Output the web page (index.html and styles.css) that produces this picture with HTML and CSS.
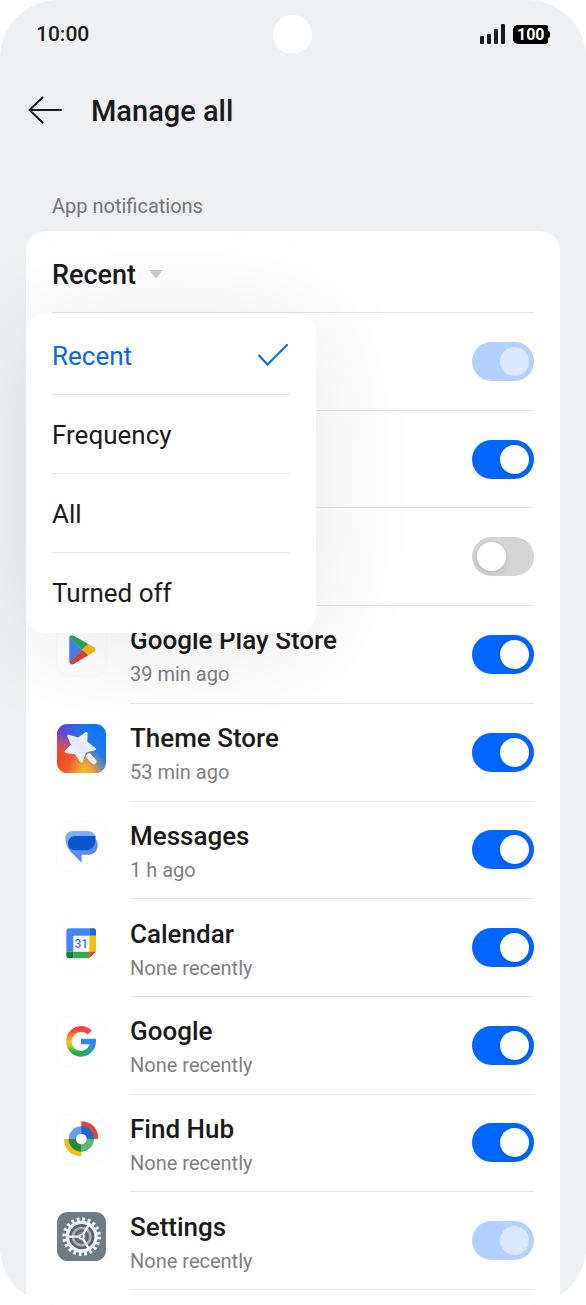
FILE: index.html
```html
<!DOCTYPE html>
<html lang="en">
<head>
<meta charset="utf-8">
<meta name="viewport" content="width=device-width, initial-scale=1">
<title>Manage all</title>
<link rel="stylesheet" href="styles.css">
</head>
<body>
<div class="phone">
  <div class="status-bar">
    <span class="clock">10:00</span>
    <span class="camera"></span>
    <span class="indicators">
      <svg class="signal" viewBox="0 0 26 20" aria-hidden="true"><rect x="1" y="12" width="4" height="8" rx="1"/><rect x="8" y="10" width="4" height="10" rx="1"/><rect x="15" y="5" width="4" height="15" rx="1"/><rect x="22" width="4" height="20" rx="1"/></svg>
      <span class="battery">100</span>
    </span>
  </div>
  <header class="title-bar">
    <button class="back" type="button" aria-label="Back">
      <svg viewBox="0 0 34 28" aria-hidden="true"><path d="M14.500 1.500 1.500 14l13 12.500M1.500 14H33"/></svg>
    </button>
    <h1 class="title">Manage all</h1>
  </header>
  <h2 class="section-label">App notifications</h2>
  <main class="card">
    <div class="filter">
      <button class="filter-button" type="button" aria-haspopup="listbox" aria-expanded="true">Recent
        <svg class="caret" viewBox="0 0 14 9" aria-hidden="true"><path d="M.5 0h13L7.600 8q-.600.600-1.200 0z"/></svg>
      </button>
      <div class="menu" role="listbox" aria-label="Recent">
        <button class="option selected" type="button" role="option" aria-selected="true">Recent
          <svg class="check" viewBox="0 0 32 24" aria-hidden="true"><path d="M1 11.500 9.500 20.500 29 1"/></svg>
        </button>
        <button class="option" type="button" role="option" aria-selected="false">Frequency</button>
        <button class="option" type="button" role="option" aria-selected="false">All</button>
        <button class="option" type="button" role="option" aria-selected="false">Turned off</button>
      </div>
    </div>
    <ul class="apps">
      <li class="app"><div class="app-body"><input class="switch" type="checkbox" aria-label="Notifications" checked disabled></div></li>
      <li class="app"><div class="app-body"><input class="switch" type="checkbox" aria-label="Notifications" checked></div></li>
      <li class="app"><div class="app-body"><input class="switch" type="checkbox" aria-label="Notifications"></div></li>
      <li class="app">
        <svg class="icon tile" viewBox="0 0 147 147" aria-hidden="true">
          <path fill="#34a353" d="M37 34q3-9 13-5l44 25-19 17z"/>
          <path fill="#f5b70b" d="M75 71 94 54l17 10q9 7 0 14L94 88z"/>
          <path fill="#e04336" d="M37 108 75 71l19 17-44 26q-10 4-13-6z"/>
          <path fill="#4382ec" d="M37 32 75 71 37 110z"/>
        </svg>
        <div class="app-body">
          <label class="app-text" for="play"><span class="name">Google Play Store</span><span class="when">39 min ago</span></label>
          <input class="switch" type="checkbox" id="play" checked>
        </div>
      </li>
      <li class="app">
        <svg class="icon" viewBox="0 0 147 147" aria-hidden="true">
          <defs>
            <linearGradient id="theme-base" x1="0" y1="1" x2="1" y2="0"><stop offset="0" stop-color="#ff3c14"/><stop offset=".3" stop-color="#c8506a"/><stop offset=".5" stop-color="#277be8"/><stop offset="1" stop-color="#0575ff"/></linearGradient>
            <radialGradient id="theme-warm" cx=".45" cy="1.050" r=".62"><stop offset="0" stop-color="#ffc414"/><stop offset=".45" stop-color="#f9ac2c" stop-opacity=".9"/><stop offset="1" stop-color="#f9a02c" stop-opacity="0"/></radialGradient>
            <radialGradient id="theme-red" cx="0" cy=".75" r=".55"><stop offset="0" stop-color="#ff4416"/><stop offset=".5" stop-color="#f04a30" stop-opacity=".8"/><stop offset="1" stop-color="#f04a50" stop-opacity="0"/></radialGradient>
            <radialGradient id="theme-violet" cx="0" cy=".1" r=".6"><stop offset="0" stop-color="#7437d8"/><stop offset="1" stop-color="#5548d8" stop-opacity="0"/></radialGradient>
            <linearGradient id="theme-star" x1="1" y1="0" x2=".2" y2="1"><stop offset="0" stop-color="#fff"/><stop offset=".5" stop-color="#e6e8fa"/><stop offset="1" stop-color="#fff4ee"/></linearGradient>
          </defs>
          <rect width="147" height="147" rx="32" fill="url(#theme-base)"/>
          <rect width="147" height="147" rx="32" fill="url(#theme-violet)"/>
          <rect width="147" height="147" rx="32" fill="url(#theme-warm)"/>
          <rect width="147" height="147" rx="32" fill="url(#theme-red)"/>
          <path fill="url(#theme-star)" stroke="url(#theme-star)" stroke-width="8" stroke-linejoin="round" d="M88 28 87 55 113 75 84 82 73 112 56 87 27 83 46 62 35 36 63 45z"/>
          <path stroke="#f2efe8" stroke-width="17" stroke-linecap="round" d="M96 97l14 15"/>
        </svg>
        <div class="app-body">
          <label class="app-text" for="theme"><span class="name">Theme Store</span><span class="when">53 min ago</span></label>
          <input class="switch" type="checkbox" id="theme" checked>
        </div>
      </li>
      <li class="app">
        <svg class="icon tile" viewBox="0 2 147 147" aria-hidden="true">
          <path fill="#82abf7" d="M48 29h43q23 0 25 20L74 90 48 98Q25 79 25 53q0-24 23-24z"/>
          <path fill="#5b8ef5" d="M56 44h40c35 0 35 56 0 56H74v24L45 95Q33 83 33 68q0-24 23-24z"/>
          <path fill="#0b55ce" d="M54 44h61c3 22-7 43-28 43H56c-15 0-23-10-23-21s8-22 21-22z"/>
        </svg>
        <div class="app-body">
          <label class="app-text" for="messages"><span class="name">Messages</span><span class="when">1 h ago</span></label>
          <input class="switch" type="checkbox" id="messages" checked>
        </div>
      </li>
      <li class="app">
        <svg class="icon tile" viewBox="0 -7 147 147" aria-hidden="true">
          <path fill="#4285f4" d="M35 21h62v22H49v48H28V28q0-7 7-7z"/>
          <path fill="#1967d2" d="M97 21h13q7 0 7 7v15H97z"/>
          <path fill="#fbbc04" d="M97 43h20v48H97z"/>
          <path fill="#34a853" d="M49 91h48v20H49z"/>
          <path fill="#188038" d="M28 91h21v20H35q-7 0-7-7z"/>
          <path fill="#ea4335" d="M97 91h20l-20 20z"/>
          <text class="calendar-day" x="73" y="79" text-anchor="middle">31</text>
        </svg>
        <div class="app-body">
          <label class="app-text" for="calendar"><span class="name">Calendar</span><span class="when">None recently</span></label>
          <input class="switch" type="checkbox" id="calendar" checked>
        </div>
      </li>
      <li class="app">
        <svg class="icon tile" viewBox="0 0 147 147" aria-hidden="true">
          <defs>
            <linearGradient id="g-left" x1="0" y1="27" x2="0" y2="119" gradientUnits="userSpaceOnUse"><stop offset=".15" stop-color="#f9443f"/><stop offset=".32" stop-color="#fb7b2a"/><stop offset=".5" stop-color="#fcc60b"/><stop offset=".65" stop-color="#b9c72a"/><stop offset=".85" stop-color="#23b04c"/></linearGradient>
            <linearGradient id="g-bottom" x1="72" y1="0" x2="112" y2="0" gradientUnits="userSpaceOnUse"><stop offset="0" stop-color="#16b253"/><stop offset=".5" stop-color="#2aa0a0"/><stop offset="1" stop-color="#3186ff"/></linearGradient>
          </defs>
          <g fill="none" stroke-width="17">
            <path stroke="#fb4548" d="M72 35.500A37.500 37.500 0 0 1 98.500 46.500"/>
            <path stroke="url(#g-left)" d="M73 35.500a37.500 37.500 0 0 0 0 75"/>
            <path stroke="url(#g-bottom)" d="M72 110.500A37.500 37.500 0 0 0 108.500 73"/>
          </g>
          <path fill="#3186ff" d="M72 65h45v9l-9 8H72z"/>
        </svg>
        <div class="app-body">
          <label class="app-text" for="google"><span class="name">Google</span><span class="when">None recently</span></label>
          <input class="switch" type="checkbox" id="google" checked>
        </div>
      </li>
      <li class="app">
        <svg class="icon tile" viewBox="0 0 147 147" aria-hidden="true">
          <path fill="#dd473c" d="M73 22q0-4 4-3.500Q120 24 124 67q0 5-4 5H73z"/>
          <path fill="#f5bd17" d="M73 72v48q0 4-4 3.500Q26 119 21 76q0-4 4-4z"/>
          <path fill="#669df6" d="M73 72H35a38 38 0 0 1 38-38z"/>
          <path fill="#1d67d3" d="M73 72V34a38 38 0 0 1 38 38z"/>
          <path fill="#5bb974" d="M73 72h38a38 38 0 0 1-38 38z"/>
          <path fill="#24883f" d="M73 72v38a38 38 0 0 1-38-38z"/>
          <circle cx="73" cy="72" r="16" fill="#fff"/>
        </svg>
        <div class="app-body">
          <label class="app-text" for="find"><span class="name">Find Hub</span><span class="when">None recently</span></label>
          <input class="switch" type="checkbox" id="find" checked>
        </div>
      </li>
      <li class="app">
        <svg class="icon" viewBox="0 0 147 147" aria-hidden="true">
          <rect width="147" height="147" rx="32" fill="#707c85"/>
          <circle cx="74" cy="74" r="44" fill="#59636b"/>
          <circle cx="74" cy="74" r="26" fill="none" stroke="#a9b0b8" stroke-width="8"/>
          <circle cx="74" cy="74" r="15" fill="#747e87"/>
          <g fill="none" stroke="#f0f3fb">
            <circle cx="74" cy="74" r="43" stroke-width="10"/>
            <circle cx="74" cy="74" r="52" stroke-width="12" stroke-dasharray="8.170 8.170"/>
            <path stroke-width="7" d="M31 74h43l22-37M74 74l22 37"/>
          </g>
          <circle cx="74" cy="74" r="9" fill="#f0f3fb"/>
          <circle cx="74" cy="74" r="4" fill="#707c85"/>
        </svg>
        <div class="app-body">
          <label class="app-text" for="settings"><span class="name">Settings</span><span class="when">None recently</span></label>
          <input class="switch" type="checkbox" id="settings" checked disabled>
        </div>
      </li>
    </ul>
  </main>
</div>
</body>
</html>
```
FILE: styles.css
```css
* { box-sizing: border-box; }

body {
  margin: 0;
  background: #fff;
  color: #1a1a1a;
  font-family: Roboto, "Liberation Sans", sans-serif;
}

button {
  border: 0;
  padding: 0;
  background: none;
  color: inherit;
  font: inherit;
  text-align: left;
}

.phone {
  display: flex;
  flex-direction: column;
  min-height: 100vh;
  padding: 0 26px;
  overflow: hidden;
  border-radius: 58px;
  background: #eff0f2;
}

.status-bar {
  display: grid;
  grid-template-columns: 1fr auto 1fr;
  align-items: center;
  height: 68px;
  padding: 0 10px 0 9px;
}

.clock {
  padding-left: 1px;
  font-size: 21px;
  font-weight: 500;
}

.camera {
  width: 39px;
  height: 39px;
  border-radius: 50%;
  background: #fff;
}

.indicators {
  display: flex;
  align-items: center;
  justify-content: flex-end;
  gap: 8px;
}

.signal {
  width: 26px;
  height: 20px;
  fill: #1a1a1a;
}

.battery {
  display: flex;
  align-items: center;
  justify-content: space-between;
  width: 37px;
  padding-left: 4px;
  border-radius: 5px;
  background: linear-gradient(#000, #000) 0 0 / 35px 100% no-repeat;
  color: #fff;
  font-size: 16px;
  font-weight: 700;
  line-height: 19px;
}

.battery::after {
  content: "";
  width: 2px;
  height: 7px;
  border-radius: 0 2px 2px 0;
  background: #000;
}

.title-bar {
  display: flex;
  align-items: center;
  gap: 29px;
  height: 84px;
  padding-left: 2px;
}

.back {
  display: flex;
}

.back svg {
  width: 34px;
  height: 28px;
  fill: none;
  stroke: #1a1a1a;
  stroke-width: 2;
  stroke-linecap: round;
  stroke-linejoin: round;
}

.title {
  margin: 0;
  padding-top: 2px;
  font-size: 29px;
  font-weight: 480;
}

.section-label {
  margin: 0;
  padding: 42px 26px 12px;
  color: #747576;
  font-size: 20px;
  font-weight: 400;
  line-height: 25px;
}

.card {
  display: flex;
  flex: 1;
  flex-direction: column;
  padding: 0 26px 15px;
  border-radius: 20px 20px 0 0;
  background: #fff;
}

.filter {
  position: relative;
  border-bottom: 1px solid #e4e4e4;
}

.filter-button {
  display: flex;
  align-items: center;
  gap: 13px;
  height: 81px;
  padding-top: 6px;
  font-size: 27px;
  font-weight: 480;
}

.caret {
  width: 14px;
  height: 9px;
  fill: #cbcbcb;
}

.menu {
  position: absolute;
  top: 82px;
  left: -26px;
  width: 290px;
  padding: 3px 26px 1px;
  border-radius: 20px;
  background: #fff;
  box-shadow: 0 10px 110px rgba(0, 0, 0, 0.09);
}

.option {
  display: flex;
  align-items: center;
  justify-content: space-between;
  width: 100%;
  height: 79px;
  padding-top: 1px;
  border-bottom: 1px solid #e6e6e6;
  font-size: 26px;
  font-weight: 380;
}

.option:last-child {
  border-bottom-color: transparent;
}

.selected {
  color: #0b67e8;
}

.check {
  width: 32px;
  height: 24px;
  fill: none;
  stroke: #0b67e8;
  stroke-width: 2;
  stroke-linecap: round;
}

.apps {
  display: flex;
  flex: 1;
  flex-direction: column;
  margin: 0;
  padding: 0;
  list-style: none;
}

.app {
  display: flex;
  flex: 1 0 97px;
  align-items: flex-start;
  padding-left: 5px;
}

.icon {
  flex: none;
  width: 49px;
  height: 49px;
  margin-top: 20px;
  margin-right: 24px;
}

.tile {
  border-radius: 11px;
  box-shadow: 0 0 2px rgba(0, 0, 0, 0.07);
}

.calendar-day {
  fill: #3a76d8;
  font-size: 36px;
  font-weight: 500;
}

.app-body {
  display: flex;
  flex: 1;
  align-items: center;
  align-self: stretch;
  border-bottom: 1px solid #e4e4e4;
}

.app-text {
  display: flex;
  flex: 1;
  flex-direction: column;
  padding-top: 5px;
}

.name {
  font-size: 26px;
  font-weight: 480;
  line-height: 35px;
}

.when {
  color: #808080;
  font-size: 20px;
  font-weight: 380;
  line-height: 32px;
}

.switch {
  display: flex;
  align-items: center;
  flex: none;
  width: 62px;
  height: 39px;
  margin: 0 0 0 auto;
  padding: 0 5px;
  border-radius: 20px;
  appearance: none;
  background: #d4d4d4;
}

.switch::before {
  content: "";
  width: 29px;
  height: 29px;
  border-radius: 50%;
  background: #fff;
  box-shadow: 0 2px 6px rgba(0, 0, 0, 0.12);
}

.switch:checked {
  justify-content: flex-end;
  background: #0066ff;
}

.switch:disabled {
  background: #b2d1ff;
}

.switch:disabled::before {
  background: #dbe8ff;
  box-shadow: none;
}
```
